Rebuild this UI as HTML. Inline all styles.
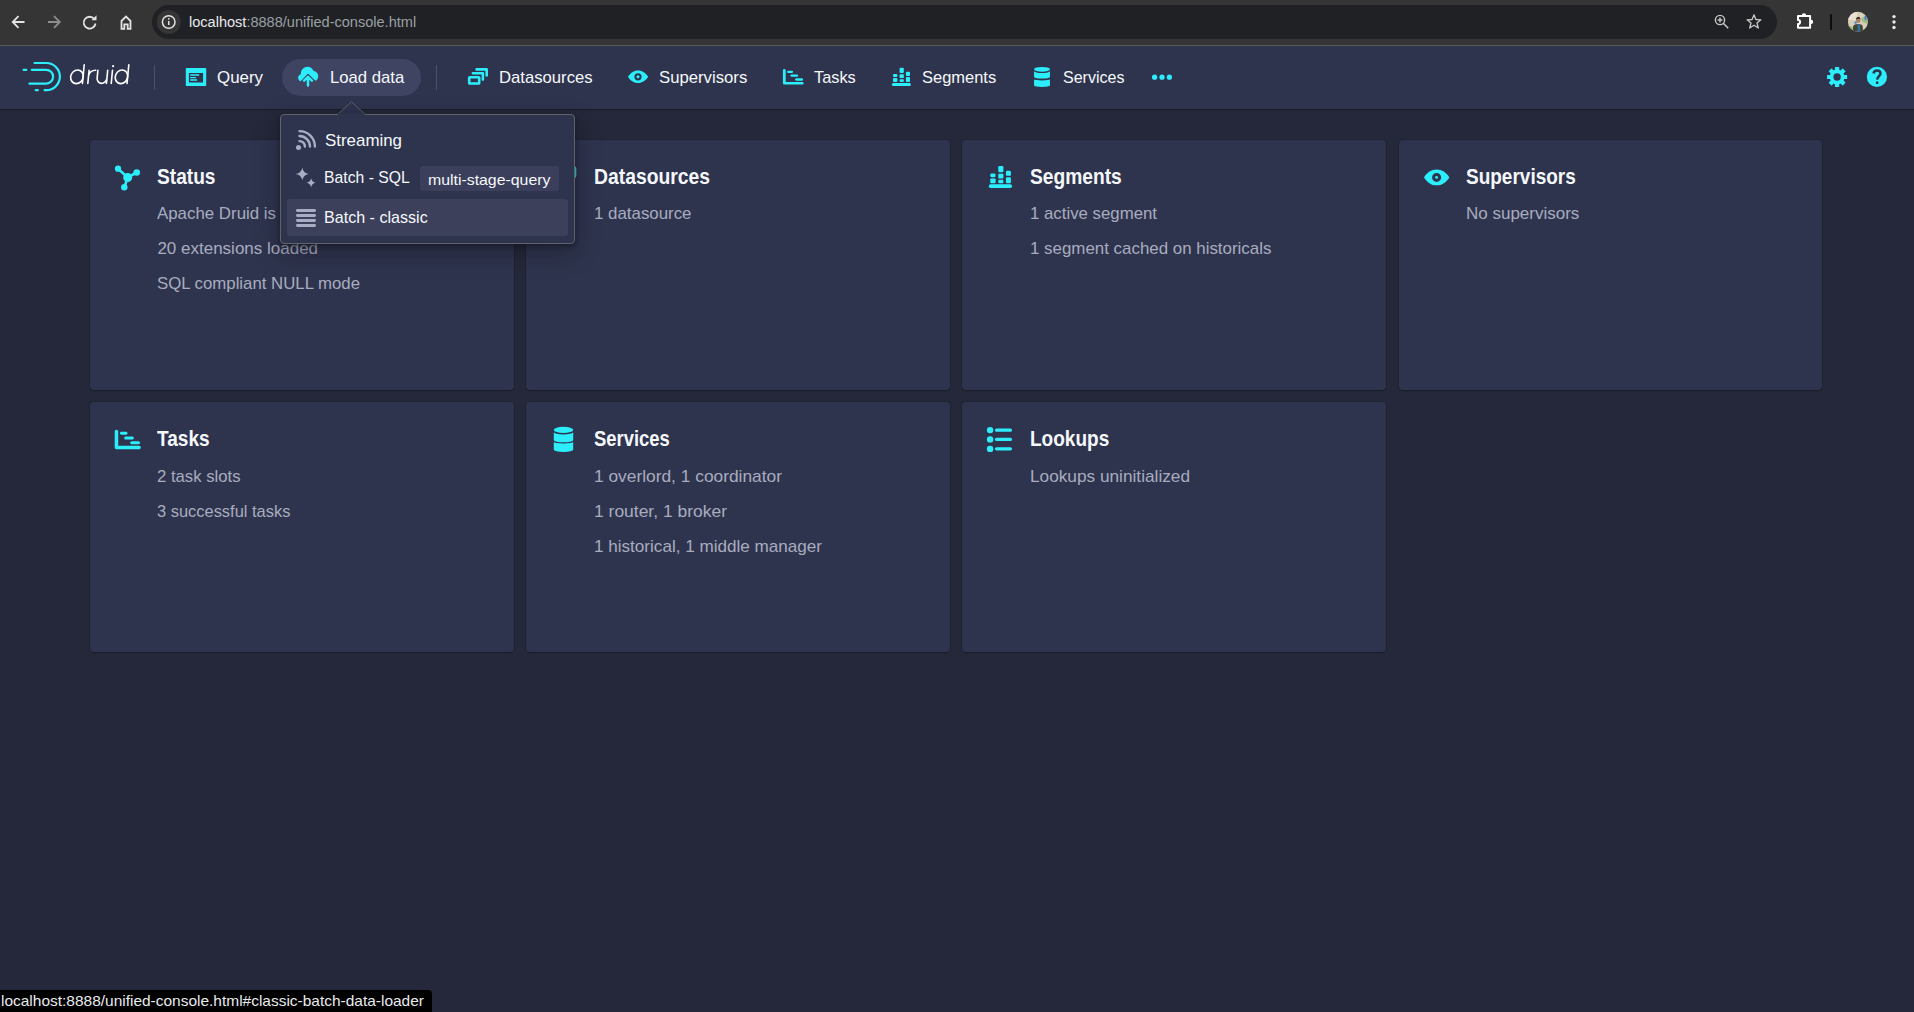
<!DOCTYPE html>
<html><head><meta charset="utf-8">
<style>
*{box-sizing:border-box;margin:0;padding:0}
html,body{width:1914px;height:1012px;overflow:hidden;background:#24283a;font-family:"Liberation Sans",sans-serif}
.a{position:absolute}
.t{position:absolute;white-space:nowrap;line-height:1;transform-origin:0 0}
#chrome{position:absolute;left:0;top:0;width:1914px;height:46px;background:#353535;border-bottom:1px solid #5b5b5b}
#omni{position:absolute;left:152px;top:5px;width:1625px;height:34px;border-radius:17px;background:#202124}
#nav{position:absolute;left:0;top:46px;width:1914px;height:63px;background:#2f344e;box-shadow:0 1px 1px rgba(16,18,26,.5)}
.card{position:absolute;width:424px;height:249.5px;background:#2f344e;border-radius:4px;box-shadow:0 0 0 1px rgba(16,18,26,.2),0 1px 1px rgba(16,18,26,.35)}
.sep{position:absolute;width:1px;background:#4b5070}
#pop{position:absolute;left:280px;top:114px;width:295px;height:130px;background:#2f344e;border:1px solid #626369;border-radius:4px;box-shadow:0 2px 4px rgba(10,12,20,.4),0 8px 24px rgba(10,12,20,.4)}
svg{position:absolute;overflow:visible}
</style></head>
<body>
<!-- browser chrome -->
<div id="chrome"></div>
<div id="omni"></div>
<svg style="left:0;top:0" width="1914" height="46">
  <g fill="none" stroke="#e3e3e3" stroke-width="1.8" stroke-linecap="butt">
    <path d="M24.5,22 H13 M18.5,16.2 L12.7,22 L18.5,27.8"/>
    <path d="M48,22 H59.5 M54,16.2 L59.8,22 L54,27.8" stroke="#8d8d8d"/>
    <path d="M94.3,19 A5.9,5.9 0 1 0 95.5,23.5"/>
    <path d="M121.5,28.8 V21 L126,16.6 L130.5,21 V28.8 H127.7 V24.3 H124.3 V28.8 Z" stroke-linejoin="miter"/>
  </g>
  <path d="M96.5,15.2 V20.2 H91.5 Z" fill="#e3e3e3"/>
  <circle cx="168.7" cy="22" r="12" fill="#353535"/>
  <circle cx="168.7" cy="22" r="6.3" fill="none" stroke="#e3e3e3" stroke-width="1.5"/>
  <rect x="168" y="21" width="1.5" height="4" fill="#e3e3e3"/>
  <circle cx="168.75" cy="18.8" r="0.9" fill="#e3e3e3"/>
  <!-- zoom icon -->
  <circle cx="1720" cy="20" r="4.6" fill="none" stroke="#c8c8c8" stroke-width="1.4"/>
  <path d="M1723.3,23.3 L1728.2,28.3" stroke="#c8c8c8" stroke-width="1.5"/>
  <path d="M1720,17.6 V22.4 M1717.6,20 H1722.4" stroke="#c8c8c8" stroke-width="1.4"/>
  <!-- star -->
  <path d="M1754,14.8 L1755.9,19.5 L1760.9,19.8 L1757,23 L1758.3,28 L1754,25.2 L1749.7,28 L1751,23 L1747.1,19.8 L1752.1,19.5 Z" fill="none" stroke="#c8c8c8" stroke-width="1.3" stroke-linejoin="round"/>
  <!-- extension puzzle -->
  <path d="M1798,16 H1810.1 V27.8 H1798 V24.1 A2.1,2.1 0 0 0 1798,19.9 Z" fill="none" stroke="#ffffff" stroke-width="2" stroke-linejoin="round"/>
  <path d="M1801.8,15.3 A2.15,2.15 0 0 1 1806.1,15.3 Z" fill="#ffffff"/>
  <path d="M1811,19.8 A2.15,2.15 0 0 1 1811,24.1 Z" fill="#ffffff"/>
  <rect x="1830" y="14.3" width="2" height="15.5" fill="#0d0d0d"/>
  <!-- avatar -->
  <defs><clipPath id="av"><circle cx="1857.9" cy="21.8" r="10"/></clipPath></defs>
  <g clip-path="url(#av)">
    <rect x="1847" y="11" width="22" height="22" fill="#d9cfb8"/>
    <rect x="1848" y="12" width="9" height="8" fill="#e8e2d0"/>
    <path d="M1861.5,18 Q1865,16 1868.5,18.5 L1868.5,24 Q1864.5,23.5 1862,21.5 Z" fill="#8fb672" opacity="0.75"/>
    <path d="M1848,27 Q1851,25 1853,28 L1850,32 Z" fill="#8fae6a"/>
    <rect x="1864.5" y="15.6" width="2" height="4.6" rx="1" fill="#3f7fcf"/>
    <circle cx="1855.6" cy="22.6" r="1.2" fill="#3f7fcf"/>
    <path d="M1852.6,33 L1853.2,26 Q1854,24.2 1858,24 Q1862,24.2 1862.6,26 L1863.2,33 Z" fill="#3e4632"/>
    <rect x="1857.6" y="24.2" width="2.6" height="8.8" fill="#3b6c9e"/>
    <ellipse cx="1858.2" cy="20.2" rx="2.2" ry="2.7" fill="#a9826c"/>
    <path d="M1855.9,19.4 Q1856,16.8 1858.3,16.8 Q1860.6,16.9 1860.5,19.2 Q1858.5,18.2 1855.9,19.4 Z" fill="#3a2c25"/>
  </g>
  <circle cx="1894" cy="16.6" r="1.7" fill="#e8e8e8"/>
  <circle cx="1894" cy="22" r="1.7" fill="#e8e8e8"/>
  <circle cx="1894" cy="27.5" r="1.7" fill="#e8e8e8"/>
</svg>
<div class="t" style="left:189.4px;top:14px;font-size:15.5px;color:#e8eaed;transform:scaleX(0.938)">localhost<span style="color:#9aa0a6">:8888/unified-console.html</span></div>

<!-- navbar -->
<div id="nav"></div>
<div class="a" style="left:282px;top:59px;width:139px;height:37px;border-radius:18.5px;background:#3f4463"></div>
<div class="sep" style="left:154px;top:65px;height:25px"></div>
<div class="sep" style="left:436px;top:65px;height:25px"></div>

<svg style="left:0;top:46px" width="1914" height="63" viewBox="0 46 1914 63">
  <!-- druid logo -->
  <g fill="none" stroke="#2ceefb" stroke-width="2.2" stroke-linecap="round">
    <path d="M34.5,63 H46.3 A13.6,13.6 0 0 1 46.3,90.2 H44.6"/>
    <path d="M35.8,90.2 H37.8"/>
    <path d="M23.6,69.8 H26.3"/>
    <path d="M31.8,69.8 H46.2 A6.9,6.9 0 0 1 46.2,83.6 H29.4"/>
  </g>
  <g fill="none" stroke="#ffffff" stroke-width="1.6" stroke-linecap="round" transform="translate(0,83.6) skewX(-5.5) translate(0,-83.6)">
    <ellipse cx="76.3" cy="76.8" rx="6.3" ry="6.8"/>
    <path d="M82.4,64.8 V83.4"/>
    <path d="M87.8,70.4 V83.4 M87.8,76 Q88.6,70.3 94.4,70.3"/>
    <path d="M96.6,70.4 V78 A4.9,5.4 0 0 0 106.4,78 V70.4 M106.4,70.4 V83.4"/>
    <path d="M111.2,70.4 V83.4"/>
    <path d="M120.8,76.8 m-6.2,0 a6.2,6.8 0 1 0 12.4,0 a6.2,6.8 0 1 0 -12.4,0"/>
    <path d="M127,64.8 V83.4"/>
  </g>
  <g transform="translate(0,83.6) skewX(-5.5) translate(0,-83.6)"><circle cx="111.4" cy="66.2" r="1.1" fill="#fff"/></g>

  <!-- query: application icon -->
  <g fill="#2ceefb">
    <path fill-rule="evenodd" d="M186.5,68 H205.5 A0.8,0.8 0 0 1 206.2,68.8 V85.2 A0.8,0.8 0 0 1 205.5,86 H186.5 A0.8,0.8 0 0 1 185.8,85.2 V68.8 A0.8,0.8 0 0 1 186.5,68 Z M188.9,73 V82.6 H203.1 V73 Z"/>
    <rect x="190.1" y="74.2" width="9.2" height="1.6" rx="0.5"/>
    <rect x="190.1" y="77" width="5.9" height="1.3" rx="0.5"/>
    <rect x="190.1" y="79.2" width="7.1" height="1.6" rx="0.5"/>
  </g>
  <!-- cloud upload -->
  <path fill="#2ceefb" d="M300.6,81.3 C297.5,80 297,75.5 300.8,74.2 C300.8,69.5 304,66.7 307.6,66.7 C310.6,66.7 312.6,68.5 313.5,70.9 C317.2,71.5 318.6,74.5 318.1,77.2 C317.8,79.2 316.8,80.2 315.4,80.7 L308,73.4 Z"/>
  <path d="M304.1,80.6 L308,76.9 L311.9,80.6 M308,77.5 V85.6" fill="none" stroke="#2ceefb" stroke-width="2.5" stroke-linecap="round" stroke-linejoin="round"/>
  <!-- datasources: multi-select -->
  <g fill="none" stroke="#2ceefb" stroke-width="2.6" stroke-linejoin="round" stroke-linecap="round">
    <rect x="469.2" y="77.2" width="10" height="6.3" rx="0.6"/>
    <path d="M472.9,73.2 H482.9 V79.6"/>
    <path d="M476.6,69.4 H486.7 V75.5"/>
  </g>
  <!-- supervisors: eye -->
  <path fill="#2ceefb" fill-rule="evenodd" d="M628,76.8 C630.6,73 633.6,70.6 638,70.6 C642.4,70.6 645.5,73 648.2,76.8 C645.5,80.7 642.4,83.1 638,83.1 C633.6,83.1 630.6,80.7 628,76.8 Z M638,73.2 A3.6,3.6 0 1 0 638,80.4 A3.6,3.6 0 1 0 638,73.2 Z"/>
  <circle cx="638" cy="76.8" r="1.5" fill="#2ceefb"/>
  <!-- tasks: gantt -->
  <g fill="#2ceefb">
    <path d="M782.9,70.5 A1.4,1.4 0 0 1 785.7,70.5 V81.9 H802.3 A1.35,1.35 0 0 1 802.3,84.6 H784.3 A1.4,1.4 0 0 1 782.9,83.2 Z"/>
    <rect x="787.1" y="70.75" width="5.9" height="2.3" rx="1.1"/>
    <rect x="790.4" y="74.4" width="7.7" height="2.4" rx="1.2"/>
    <rect x="795.2" y="78.2" width="7.8" height="2.5" rx="1.2"/>
  </g>
  <!-- segments: stacked chart -->
  <g fill="#2ceefb">
    <rect x="891.8" y="82.9" width="19.1" height="3" rx="1.5"/>
    <rect x="893" y="74" width="4.4" height="3" rx="1.2"/>
    <rect x="893" y="78" width="4.4" height="3.9" rx="0.8"/>
    <rect x="899.6" y="67.8" width="4.2" height="5.2" rx="1"/>
    <rect x="899.6" y="74.2" width="4.2" height="3.8" rx="0.5"/>
    <rect x="899.6" y="79.2" width="4.2" height="2.7" rx="0.8"/>
    <rect x="905.9" y="71.8" width="4.1" height="4.1" rx="1"/>
    <rect x="905.9" y="77" width="4.1" height="4.9" rx="1"/>
  </g>
  <!-- services: database -->
  <g fill="#2ceefb">
    <ellipse cx="1042" cy="69.35" rx="7.95" ry="2.45"/>
    <path d="M1034.05,71.1 A7.95,1.9 0 0 0 1049.95,71.1 V77.1 A7.95,1.5 0 0 1 1034.05,77.1 Z"/>
    <path d="M1034.05,79.2 A7.95,1.2 0 0 0 1049.95,79.2 V85.4 A7.95,1.5 0 0 1 1034.05,85.4 Z"/>
  </g>
  <!-- more -->
  <g fill="#2ceefb">
    <circle cx="1154.6" cy="77.2" r="2.6"/>
    <circle cx="1162" cy="77.2" r="2.6"/>
    <circle cx="1169.4" cy="77.2" r="2.6"/>
  </g>
  <!-- cog -->
  <g transform="translate(1837.1,77)">
    <g fill="#2ceefb">
      <rect x="-2.1" y="-10.05" width="4.2" height="20.1" rx="0.6"/>
      <rect x="-2.1" y="-10.05" width="4.2" height="20.1" rx="0.6" transform="rotate(45)"/>
      <rect x="-2.1" y="-10.05" width="4.2" height="20.1" rx="0.6" transform="rotate(90)"/>
      <rect x="-2.1" y="-10.05" width="4.2" height="20.1" rx="0.6" transform="rotate(135)"/>
    </g>
    <circle r="5.6" fill="none" stroke="#2ceefb" stroke-width="3.6"/>
    <circle r="3.7" fill="#2f344e"/>
  </g>
  <!-- help -->
  <circle cx="1876.9" cy="76.9" r="10.1" fill="#2ceefb"/>
  <path d="M1873.5,73.4 C1873.9,71.3 1875.4,70.6 1877,70.6 C1879.1,70.6 1880.5,71.9 1880.5,73.6 C1880.5,75.9 1877.3,76.5 1877.1,79.7" fill="none" stroke="#2f344e" stroke-width="2.5" stroke-linecap="butt"/>
  <rect x="1875.9" y="81.4" width="2.5" height="2.5" rx="0.4" fill="#2f344e"/>
</svg>

<!-- cards -->
<div class="card" style="left:90px;top:140px"></div>
<div class="card" style="left:526px;top:140px"></div>
<div class="card" style="left:962px;top:140px"></div>
<div class="card" style="left:1399px;top:140px;width:423px"></div>
<div class="card" style="left:90px;top:402.3px"></div>
<div class="card" style="left:526px;top:402.3px"></div>
<div class="card" style="left:962px;top:402.3px"></div>

<svg style="left:0;top:0" width="1914" height="700">
  <!-- status: graph -->
  <g stroke="#2ceefb" stroke-width="2.6" fill="none" stroke-linecap="round">
    <path d="M118,168.7 L127.7,177.5 L136.7,172.5 M127.7,177.5 L124.3,187.4"/>
  </g>
  <g fill="#2ceefb">
    <circle cx="118" cy="168.7" r="3.1"/>
    <circle cx="136.7" cy="172.5" r="3.3"/>
    <circle cx="124.3" cy="187.3" r="3.2"/>
    <circle cx="127.7" cy="177.5" r="4.5"/>
  </g>
  <!-- datasources card icon (mostly covered) -->
  <g fill="none" stroke="#2ceefb" stroke-width="3.2" stroke-linejoin="round" stroke-linecap="round" transform="translate(550.8,166.6) scale(1.25) translate(-467.9,-68)">
    <rect x="469.2" y="77.2" width="10" height="6.3" rx="0.6"/>
    <path d="M472.9,73.2 H482.9 V79.6"/>
    <path d="M476.6,69.4 H486.7 V75.5"/>
  </g>
  <!-- segments card icon -->
  <g fill="#2ceefb" transform="translate(988.8,166) scale(1.215) translate(-891.8,-67.8)">
    <rect x="891.8" y="82.9" width="19.1" height="3" rx="1.5"/>
    <rect x="893" y="74" width="4.4" height="3" rx="1.2"/>
    <rect x="893" y="78" width="4.4" height="3.9" rx="0.8"/>
    <rect x="899.6" y="67.8" width="4.2" height="5.2" rx="1"/>
    <rect x="899.6" y="74.2" width="4.2" height="3.8" rx="0.5"/>
    <rect x="899.6" y="79.2" width="4.2" height="2.7" rx="0.8"/>
    <rect x="905.9" y="71.8" width="4.1" height="4.1" rx="1"/>
    <rect x="905.9" y="77" width="4.1" height="4.9" rx="1"/>
  </g>
  <!-- supervisors card eye -->
  <g transform="translate(1424,169.6) scale(1.26) translate(-628,-70.6)">
    <path fill="#2ceefb" fill-rule="evenodd" d="M628,76.8 C630.6,73 633.6,70.6 638,70.6 C642.4,70.6 645.5,73 648.2,76.8 C645.5,80.7 642.4,83.1 638,83.1 C633.6,83.1 630.6,80.7 628,76.8 Z M638,73.2 A3.6,3.6 0 1 0 638,80.4 A3.6,3.6 0 1 0 638,73.2 Z"/>
    <circle cx="638" cy="76.8" r="1.15" fill="#2ceefb"/>
  </g>
  <!-- tasks card gantt -->
  <g fill="#2ceefb" transform="translate(114.7,429.7) scale(1.26) translate(-782.9,-69.1)">
    <path d="M782.9,70.5 A1.4,1.4 0 0 1 785.7,70.5 V81.9 H802.3 A1.35,1.35 0 0 1 802.3,84.6 H784.3 A1.4,1.4 0 0 1 782.9,83.2 Z"/>
    <rect x="787.1" y="70.75" width="5.9" height="2.3" rx="1.1"/>
    <rect x="790.4" y="74.4" width="7.7" height="2.4" rx="1.2"/>
    <rect x="795.2" y="78.2" width="7.8" height="2.5" rx="1.2"/>
  </g>
  <!-- services card database -->
  <g fill="#2ceefb">
    <ellipse cx="563.5" cy="429.9" rx="9.7" ry="3.1"/>
    <path d="M553.8,432.3 A9.7,2.2 0 0 0 573.2,432.3 V440 A9.7,2.3 0 0 1 553.8,440 Z"/>
    <path d="M553.8,441.9 A9.7,1.5 0 0 0 573.2,441.9 V449.8 A9.7,2.2 0 0 1 553.8,449.8 Z"/>
  </g>
  <!-- lookups card properties -->
  <g fill="#2ceefb">
    <circle cx="990.1" cy="430.1" r="3.2"/>
    <circle cx="990.1" cy="439.4" r="3.2"/>
    <circle cx="990.1" cy="448.9" r="3.2"/>
  </g>
  <g stroke="#2ceefb" stroke-width="3.3" stroke-linecap="round">
    <path d="M996.6,430.2 H1010.4 M996.6,439.4 H1010.4 M996.6,448.8 H1010.4"/>
  </g>
</svg>

<div class="t" style="left:217.0px;top:68.71px;font-size:17px;font-weight:400;color:#f5f8fa;transform:scaleX(0.9936);">Query</div>
<div class="t" style="left:330.0px;top:68.71px;font-size:17px;font-weight:400;color:#f5f8fa;transform:scaleX(0.9823);">Load data</div>
<div class="t" style="left:499.4px;top:68.71px;font-size:17px;font-weight:400;color:#f5f8fa;transform:scaleX(0.9807);">Datasources</div>
<div class="t" style="left:659.4px;top:68.71px;font-size:17px;font-weight:400;color:#f5f8fa;transform:scaleX(0.9837);">Supervisors</div>
<div class="t" style="left:813.7px;top:68.71px;font-size:17px;font-weight:400;color:#f5f8fa;transform:scaleX(0.9616);">Tasks</div>
<div class="t" style="left:922.3px;top:68.71px;font-size:17px;font-weight:400;color:#f5f8fa;transform:scaleX(0.9693);">Segments</div>
<div class="t" style="left:1062.6px;top:68.71px;font-size:17px;font-weight:400;color:#f5f8fa;transform:scaleX(0.9419);">Services</div>
<div class="t" style="left:157.4px;top:165.78px;font-size:22px;font-weight:700;color:#f5f8fa;transform:scaleX(0.8699);">Status</div>
<div class="t" style="left:594.2px;top:165.78px;font-size:22px;font-weight:700;color:#f5f8fa;transform:scaleX(0.8783);">Datasources</div>
<div class="t" style="left:1030.2px;top:165.78px;font-size:22px;font-weight:700;color:#f5f8fa;transform:scaleX(0.8730);">Segments</div>
<div class="t" style="left:1466.2px;top:165.78px;font-size:22px;font-weight:700;color:#f5f8fa;transform:scaleX(0.8634);">Supervisors</div>
<div class="t" style="left:157.4px;top:428.18px;font-size:22px;font-weight:700;color:#f5f8fa;transform:scaleX(0.8658);">Tasks</div>
<div class="t" style="left:594.2px;top:428.18px;font-size:22px;font-weight:700;color:#f5f8fa;transform:scaleX(0.8373);">Services</div>
<div class="t" style="left:1030.2px;top:428.18px;font-size:22px;font-weight:700;color:#f5f8fa;transform:scaleX(0.8640);">Lookups</div>
<div class="t" style="left:157.4px;top:204.51px;font-size:17px;font-weight:400;color:#a8acbf;transform:scaleX(0.9915);">Apache Druid is</div>
<div class="t" style="left:157.4px;top:239.51px;font-size:17px;font-weight:400;color:#a8acbf;">20 extensions loaded</div>
<div class="t" style="left:157.4px;top:274.51px;font-size:17px;font-weight:400;color:#a8acbf;transform:scaleX(0.9870);">SQL compliant NULL mode</div>
<div class="t" style="left:594.0px;top:204.51px;font-size:17px;font-weight:400;color:#a8acbf;transform:scaleX(0.9919);">1 datasource</div>
<div class="t" style="left:1030.0px;top:204.51px;font-size:17px;font-weight:400;color:#a8acbf;transform:scaleX(0.9882);">1 active segment</div>
<div class="t" style="left:1030.0px;top:239.51px;font-size:17px;font-weight:400;color:#a8acbf;transform:scaleX(0.9940);">1 segment cached on historicals</div>
<div class="t" style="left:1466.0px;top:204.51px;font-size:17px;font-weight:400;color:#a8acbf;">No supervisors</div>
<div class="t" style="left:157.4px;top:467.71px;font-size:17px;font-weight:400;color:#a8acbf;transform:scaleX(0.9830);">2 task slots</div>
<div class="t" style="left:157.4px;top:502.71px;font-size:17px;font-weight:400;color:#a8acbf;transform:scaleX(0.9670);">3 successful tasks</div>
<div class="t" style="left:594.0px;top:467.71px;font-size:17px;font-weight:400;color:#a8acbf;transform:scaleX(1.0202);">1 overlord, 1 coordinator</div>
<div class="t" style="left:594.0px;top:502.71px;font-size:17px;font-weight:400;color:#a8acbf;transform:scaleX(1.0273);">1 router, 1 broker</div>
<div class="t" style="left:594.0px;top:537.71px;font-size:17px;font-weight:400;color:#a8acbf;transform:scaleX(1.0054);">1 historical, 1 middle manager</div>
<div class="t" style="left:1030.0px;top:467.71px;font-size:17px;font-weight:400;color:#a8acbf;transform:scaleX(1.0137);">Lookups uninitialized</div>

<!-- popover -->
<svg style="left:0;top:0" width="700" height="300">
  <path d="M337.5,114.6 L351.5,101.8 L365.5,114.6 Z" fill="#2f344e" stroke="#5d606e" stroke-width="1" stroke-linejoin="round"/>
</svg>
<div id="pop"></div>
<svg style="left:0;top:0" width="700" height="300">
  <rect x="338" y="113.5" width="27" height="2" fill="#2f344e"/>
</svg>
<div class="a" style="left:287px;top:199.3px;width:281px;height:36.7px;background:#3c405b;border-radius:3px"></div>
<div class="a" style="left:420px;top:166px;width:139px;height:24.5px;background:#3b3f5b;border-radius:3px"></div>
<svg style="left:0;top:0" width="700" height="300">
  <!-- feed -->
  <circle cx="298.5" cy="147.6" r="2.5" fill="#a8adc3"/>
  <g fill="none" stroke="#a8adc3" stroke-width="2.4" stroke-linecap="round">
    <path d="M299.5,141.1 A5.4,5.4 0 0 1 304.9,146.5"/>
    <path d="M299.5,136 A10.5,10.5 0 0 1 310,146.5"/>
    <path d="M299.5,131.1 A15.4,15.4 0 0 1 314.9,146.5"/>
  </g>
  <!-- clean sparkle -->
  <path fill="#a8adc3" d="M302.3,167.7 Q303.3,173 308.7,174 Q303.3,175 302.3,180.3 Q301.3,175 295.9,174 Q301.3,173 302.3,167.7 Z"/>
  <path fill="#a8adc3" d="M311.1,178.2 Q311.8,182.1 315.7,182.8 Q311.8,183.5 311.1,187.4 Q310.4,183.5 306.5,182.8 Q310.4,182.1 311.1,178.2 Z"/>
  <!-- list -->
  <g stroke="#a8adc3" stroke-width="2.8" stroke-linecap="round">
    <path d="M297.4,210.5 H314.6 M297.4,215.5 H314.6 M297.4,220.5 H314.6 M297.4,225.5 H314.6"/>
  </g>
</svg>
<div class="t" style="left:325.0px;top:131.81px;font-size:17px;font-weight:400;color:#f5f8fa;transform:scaleX(0.9937);">Streaming</div>
<div class="t" style="left:324.3px;top:169.21px;font-size:17px;font-weight:400;color:#f5f8fa;transform:scaleX(0.9265);">Batch - SQL</div>
<div class="t" style="left:324.3px;top:209.11px;font-size:17px;font-weight:400;color:#f5f8fa;transform:scaleX(0.9462);">Batch - classic</div>
<div class="t" style="left:428.4px;top:172.40px;font-size:15px;font-weight:400;color:#f5f8fa;transform:scaleX(1.0562);">multi-stage-query</div>

<!-- status bar -->
<div class="a" style="left:0;top:990px;width:432px;height:22px;background:#000;border-top-right-radius:4px"></div>
<div class="t" style="left:1.2px;top:992.7px;font-size:15px;color:#e8eaed;transform:scaleX(1.031)">localhost:8888/unified-console.html#classic-batch-data-loader</div>
</body></html>
